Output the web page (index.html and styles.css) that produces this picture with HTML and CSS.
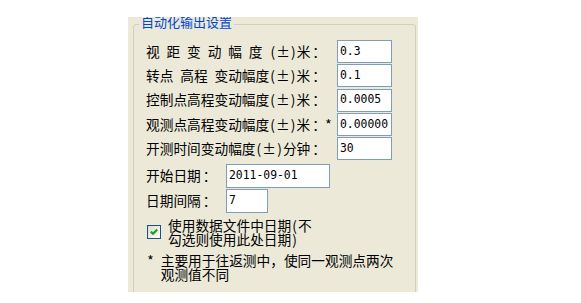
FILE: index.html
```html
<!DOCTYPE html>
<html lang="zh-CN">
<head>
<meta charset="utf-8">
<title>自动化输出设置</title>
<link rel="stylesheet" href="styles.css">
</head>
<body>
<div class="panel">
  <div class="group">
    <div class="legend">自动化输出设置</div>
    <div class="content">
      <div class="grid">
        <div class="label">视<span class="sp"></span>距<span class="sp"></span>变<span class="sp"></span>动<span class="sp"></span>幅<span class="sp"></span>度<span class="sp"></span><span class="h">(</span><span class="f">±</span><span class="h">)</span>米<span class="colon">：</span></div>
        <div class="field">0.3</div>
        <div class="label">转点<span class="sp"></span>高程<span class="sp"></span>变动幅度<span class="h">(</span><span class="f">±</span><span class="h">)</span>米<span class="colon">：</span></div>
        <div class="field">0.1</div>
        <div class="label">控制点高程变动幅度<span class="h">(</span><span class="f">±</span><span class="h">)</span>米<span class="colon">：</span></div>
        <div class="field">0.0005</div>
        <div class="label">观测点高程变动幅度<span class="h">(</span><span class="f">±</span><span class="h">)</span>米<span class="colon">：</span><span class="h star">*</span></div>
        <div class="field">0.00000</div>
        <div class="label">开测时间变动幅度<span class="h">(</span><span class="f">±</span><span class="h">)</span>分钟<span class="colon">：</span></div>
        <div class="field">30</div>
      </div>
      <div class="dates">
        <div class="label">开始日期<span class="colon">：</span></div>
        <div class="field date">2011-09-01</div>
        <div class="label">日期间隔<span class="colon">：</span></div>
        <div class="field interval">7</div>
      </div>
      <div class="check-row">
        <div class="checkbox">
          <svg width="12" height="12" viewBox="0 0 12 12"><path d="M2.8 5.6 L5 7.8 L9.2 3.6" fill="none" stroke="#21a121" stroke-width="2.2"/></svg>
        </div>
        <div class="check-text">使用数据文件中日期<span class="h">(</span>不<br>勾选则使用此处日期<span class="h">)</span></div>
      </div>
      <div class="note">
        <span class="h">*</span><span class="sp"></span>
        <div class="note-text">主要用于往返测中，使同一观测点两次<br>观测值不同</div>
      </div>
    </div>
  </div>
</div>
</body>
</html>
```

FILE: styles.css
```css
html, body {
  margin: 0;
  padding: 0;
  background: #ffffff;
}
body {
  font-family: "Noto Sans CJK SC", "Noto Sans", sans-serif;
  font-size: 13.7px;
  line-height: 13.5px;
  color: #000;
}
.panel {
  margin: 17px 0 0 128px;
  width: 290px;
  height: 275px;
  background: #ece9d8;
  overflow: hidden;
  padding-top: 7px;
  box-sizing: border-box;
}
.group {
  position: relative;
  margin-left: 5px;
  width: 283px;
  height: 300px;
  box-sizing: border-box;
  border: 1px solid #d0d0bf;
  border-radius: 3px;
}
.legend {
  position: absolute;
  top: -10px;
  left: 5px;
  padding: 0 2px;
  background: #ece9d8;
  color: #0046d5;
  font-size: 13px;
  line-height: 14px;
}
.content {
  padding: 15px 0 0 12px;
}
.grid {
  display: grid;
  grid-template-columns: 191px 55px;
  grid-auto-rows: 23px;
  row-gap: 1.25px;
}
.label {
  display: flex;
  align-items: center;
  white-space: nowrap;
}
.sp {
  display: inline-block;
  width: 6.85px;
  flex: none;
}
.h {
  display: inline-block;
  width: 6.85px;
  text-align: center;
  flex: none;
}
.f {
  display: inline-block;
  width: 13.7px;
  text-align: center;
  flex: none;
}
.colon {
  padding-left: 2px;
}
.star {
  margin-left: -1px;
}
.field {
  box-sizing: border-box;
  border: 1px solid #7f9db9;
  background: #fff;
  font-family: "DejaVu Sans Mono", monospace;
  font-size: 11.4px;
  display: flex;
  align-items: center;
  padding-left: 2px;
  white-space: nowrap;
  overflow: hidden;
}
.dates {
  display: grid;
  grid-template-columns: 80px auto;
  grid-auto-rows: 23px;
  row-gap: 2px;
  margin-top: 4px;
  justify-items: start;
}
.date { width: 104px; height: 24px; }
.interval { width: 42px; height: 24px; }
.check-row {
  display: flex;
  align-items: flex-start;
  margin-top: 7px;
  padding-left: 1px;
}
.checkbox {
  box-sizing: border-box;
  width: 14px;
  height: 14px;
  margin-top: 6px;
  border: 1px solid #1c5180;
  background: linear-gradient(135deg, #dcdcd7 0%, #f4f4f0 70%, #ffffff 100%);
  flex: none;
}
.checkbox svg { display: block; }
.check-text {
  margin-left: 7px;
}
.note {
  display: flex;
  margin-top: 8px;
  padding-left: 1px;
}
```
